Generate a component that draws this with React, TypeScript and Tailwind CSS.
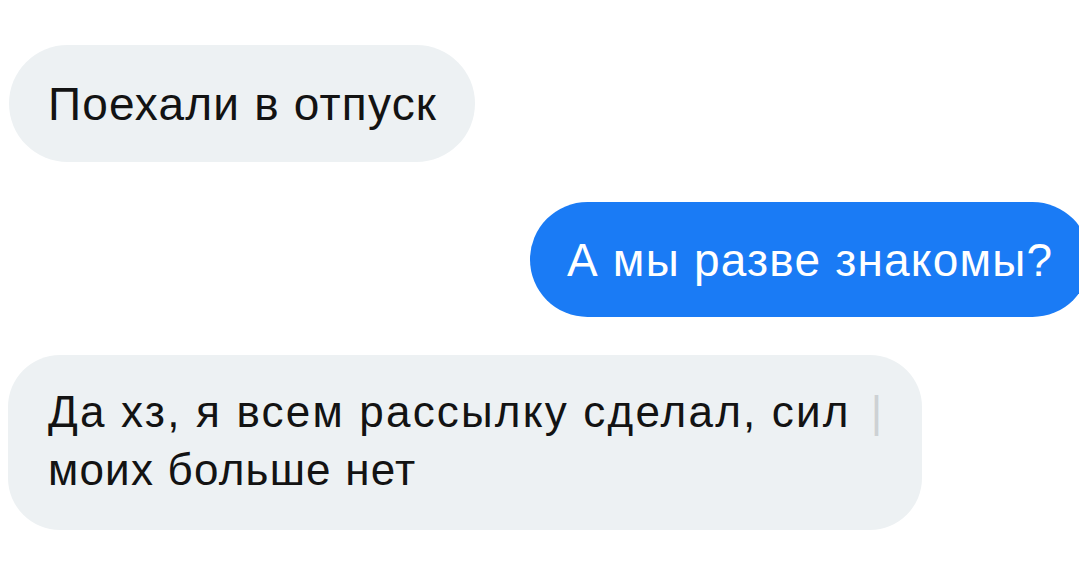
export default function App() {
  return (
    <div className="w-[1079px] h-[563px] bg-white overflow-hidden flex flex-col font-['Liberation_Sans',Arial,sans-serif]">
      <div className="ml-[9px] mt-[45px] h-[117px] w-[466px] rounded-full bg-[#edf1f3] flex items-center pl-[39px] text-[46px] tracking-[1.2px] leading-none text-[#131313]">
        Поехали в отпуск
      </div>

      <div className="ml-[530px] mt-[40px] h-[115px] w-[560px] shrink-0 rounded-full bg-[#1a7bf5] flex items-center pl-[37px] text-[46px] tracking-[1.2px] leading-none text-white">
        А мы разве знакомы?
      </div>

      <div className="ml-[8px] mt-[38px] h-[175px] w-[914px] rounded-[52px] bg-[#edf1f3] pl-[40px] pt-[28px] text-[44px] leading-[58px] text-[#131313]">
        <p className="tracking-[2.2px]">
          Да хз, я всем рассылку сделал, сил
          <span className="ml-[20px] text-[#cdd1d4] font-light">|</span>
        </p>
        <p className="tracking-[1.2px]">моих больше нет</p>
      </div>
    </div>
  );
}
